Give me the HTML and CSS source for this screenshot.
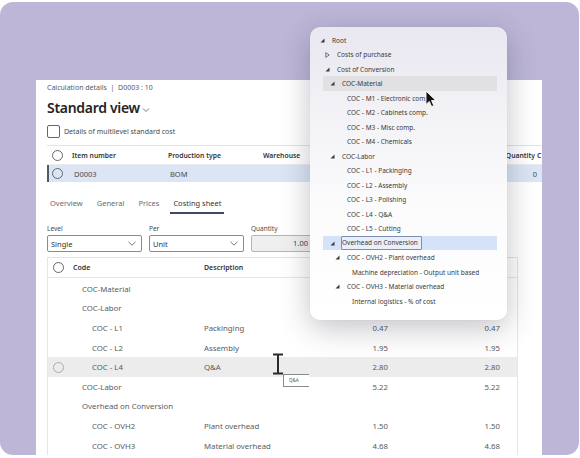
FILE: index.html
```html
<!DOCTYPE html>
<html lang="en">
<head>
<meta charset="utf-8">
<title>Costing sheet</title>
<link rel="stylesheet" href="styles.css">
</head>
<body>
<div class="card">
  <div class="window">
    <div class="crumb">Calculation details &nbsp;|&nbsp; D0003 : 10</div>
    <div class="title">Standard view <svg class="title-chev" width="8" height="6" viewBox="0 0 8 6"><polyline points="1,1.5 4,4.5 7,1.5" fill="none" stroke="#555" stroke-width="0.8"/></svg></div>
    <div class="check"><span class="box"></span><span>Details of multilevel standard cost</span></div>

    <div class="tgrid">
      <div class="trow thead">
        <span class="cell"><span class="radio"></span></span>
        <span class="cell">Item number</span>
        <span class="cell">Production type</span>
        <span class="cell">Warehouse</span>
        <span class="cell num">Quantity</span>
        <span class="cell cc">C</span>
      </div>
      <div class="trow tsel">
        <span class="cell"><span class="radio"></span></span>
        <span class="cell">D0003</span>
        <span class="cell">BOM</span>
        <span class="cell"></span>
        <span class="cell num">0</span>
        <span class="cell cc"></span>
      </div>
    </div>

    <div class="tabs">
      <span class="tab">Overview</span>
      <span class="tab">General</span>
      <span class="tab">Prices</span>
      <span class="tab active">Costing sheet</span>
    </div>

    <div class="filters">
      <div class="field">
        <div class="flabel">Level</div>
        <div class="select">Single<svg width="8" height="5" viewBox="0 0 8 5"><polyline points="0.5,0.8 4,4.2 7.5,0.8" fill="none" stroke="#555" stroke-width="0.8"/></svg></div>
      </div>
      <div class="field">
        <div class="flabel">Per</div>
        <div class="select">Unit<svg width="8" height="5" viewBox="0 0 8 5"><polyline points="0.5,0.8 4,4.2 7.5,0.8" fill="none" stroke="#555" stroke-width="0.8"/></svg></div>
      </div>
      <div class="field">
        <div class="flabel">Quantity</div>
        <div class="qty">1.00</div>
      </div>
    </div>

    <div class="btable">
      <div class="brow bhead">
        <span class="cell"><span class="radio"></span></span>
        <span class="cell code">Code</span>
        <span class="cell">Description</span>
        <span class="cell"></span><span class="cell"></span><span class="cell"></span>
      </div>
      <div class="brow"><span class="cell"></span><span class="cell code lv1">COC-Material</span><span class="cell"></span><span class="cell num"></span><span class="cell num"></span><span class="cell"></span></div>
      <div class="brow"><span class="cell"></span><span class="cell code lv1">COC-Labor</span><span class="cell"></span><span class="cell num"></span><span class="cell num"></span><span class="cell"></span></div>
      <div class="brow"><span class="cell"></span><span class="cell code lv2">COC - L1</span><span class="cell">Packinging</span><span class="cell num">0.47</span><span class="cell num">0.47</span><span class="cell"></span></div>
      <div class="brow"><span class="cell"></span><span class="cell code lv2">COC - L2</span><span class="cell">Assembly</span><span class="cell num">1.95</span><span class="cell num">1.95</span><span class="cell"></span></div>
      <div class="brow hover"><span class="cell"><span class="radio light"></span></span><span class="cell code lv2">COC - L4</span><span class="cell">Q&amp;A</span><span class="cell num">2.80</span><span class="cell num">2.80</span><span class="cell"></span></div>
      <div class="brow"><span class="cell"></span><span class="cell code lv1">COC-Labor</span><span class="cell"></span><span class="cell num">5.22</span><span class="cell num">5.22</span><span class="cell"></span></div>
      <div class="brow"><span class="cell"></span><span class="cell code lv1">Overhead on Conversion</span><span class="cell"></span><span class="cell num"></span><span class="cell num"></span><span class="cell"></span></div>
      <div class="brow"><span class="cell"></span><span class="cell code lv2">COC - OVH2</span><span class="cell">Plant overhead</span><span class="cell num">1.50</span><span class="cell num">1.50</span><span class="cell"></span></div>
      <div class="brow"><span class="cell"></span><span class="cell code lv2">COC - OVH3</span><span class="cell">Material overhead</span><span class="cell num">4.68</span><span class="cell num">4.68</span><span class="cell"></span></div>
    </div>
  </div>

  <div class="ibeam">
    <svg width="12" height="22" viewBox="0 0 12 22"><path d="M1 1.5 H11 M6 1.5 V20.5 M1 20.5 H11" fill="none" stroke="#2b2b2b" stroke-width="2"/></svg>
  </div>
  <div class="tip">Q&amp;A</div>

  <div class="popup">
    <div class="tree">
      <div class="node l0"><span class="tri"><svg width="5" height="5" viewBox="0 0 5 5"><polygon points="4.5,0.5 4.5,4.5 0.5,4.5" fill="#3a3a3a"/></svg></span>Root</div>
      <div class="node l1"><span class="tri"><svg width="5" height="6" viewBox="0 0 5 6"><polygon points="0.8,0.6 4.2,3 0.8,5.4" fill="none" stroke="#555" stroke-width="0.8"/></svg></span>Costs of purchase</div>
      <div class="node l1"><span class="tri"><svg width="5" height="5" viewBox="0 0 5 5"><polygon points="4.5,0.5 4.5,4.5 0.5,4.5" fill="#3a3a3a"/></svg></span>Cost of Conversion</div>
      <div class="node l2 hl-gray"><span class="tri"><svg width="5" height="5" viewBox="0 0 5 5"><polygon points="4.5,0.5 4.5,4.5 0.5,4.5" fill="#3a3a3a"/></svg></span>COC-Material</div>
      <div class="node l3"><span class="tri"></span>COC - M1 - Electronic comp.</div>
      <div class="node l3"><span class="tri"></span>COC - M2 - Cabinets comp.</div>
      <div class="node l3"><span class="tri"></span>COC - M3 - Misc comp.</div>
      <div class="node l3"><span class="tri"></span>COC - M4 - Chemicals</div>
      <div class="node l2"><span class="tri"><svg width="5" height="5" viewBox="0 0 5 5"><polygon points="4.5,0.5 4.5,4.5 0.5,4.5" fill="#3a3a3a"/></svg></span>COC-Labor</div>
      <div class="node l3"><span class="tri"></span>COC - L1 - Packinging</div>
      <div class="node l3"><span class="tri"></span>COC - L2 - Assembly</div>
      <div class="node l3"><span class="tri"></span>COC - L3 - Polishing</div>
      <div class="node l3"><span class="tri"></span>COC - L4 - Q&amp;A</div>
      <div class="node l3"><span class="tri"></span>COC - L5 - Cutting</div>
      <div class="node l2 hl-blue"><span class="tri"><svg width="5" height="5" viewBox="0 0 5 5"><polygon points="4.5,0.5 4.5,4.5 0.5,4.5" fill="#3a3a3a"/></svg></span><span class="editbox">Overhead on Conversion</span></div>
      <div class="node l3"><span class="tri"><svg width="5" height="5" viewBox="0 0 5 5"><polygon points="4.5,0.5 4.5,4.5 0.5,4.5" fill="#3a3a3a"/></svg></span>COC - OVH2 - Plant overhead</div>
      <div class="node l4"><span class="tri"></span>Machine depreciation - Output unit based</div>
      <div class="node l3"><span class="tri"><svg width="5" height="5" viewBox="0 0 5 5"><polygon points="4.5,0.5 4.5,4.5 0.5,4.5" fill="#3a3a3a"/></svg></span>COC - OVH3 - Material overhead</div>
      <div class="node l4"><span class="tri"></span>Internal logistics - % of cost</div>
    </div>
  </div>

  <svg class="pointer" width="12" height="18" viewBox="0 0 12 18"><path d="M1 1 L1 14.5 L4.3 11.4 L6.6 16.6 L8.8 15.6 L6.5 10.5 L10.8 10.5 Z" fill="#111" stroke="#fff" stroke-width="0.9" stroke-linejoin="round"/></svg>
</div>
</body>
</html>
```

FILE: styles.css
```css
* { box-sizing: border-box; }
html, body { margin: 0; padding: 0; background: #ffffff; }
body {
  font-family: "Noto Sans", "Open Sans", sans-serif;
  color: #333;
  width: 580px;
  height: 458px;
  overflow: hidden;
}

.card {
  position: relative;
  width: 579px;
  height: 453px;
  margin-top: 2px;
  background: #bdb6d7;
  border-radius: 13px;
  overflow: hidden;
  padding: 78px 37px 0 36px;
}

.window {
  background: #ffffff;
  height: 100%;
  padding: 0 0 0 11px;
  overflow: hidden;
}

.crumb {
  height: 16px;
  line-height: 16px;
  font-size: 7px;
  color: #5a5a5a;
}

.title {
  margin-top: 1px;
  height: 22px;
  line-height: 22px;
  font-size: 14px;
  font-weight: 600;
  letter-spacing: -0.3px;
  color: #242424;
  display: flex;
  align-items: center;
  gap: 2px;
}
.title-chev { margin-top: 3px; }

.check {
  margin-top: 4px;
  height: 17px;
  display: flex;
  align-items: center;
  gap: 4px;
  font-size: 7px;
  color: #4a4a4a;
}
.box {
  width: 13px;
  height: 13px;
  border: 1px solid #666;
  border-radius: 2px;
  background: #fff;
}

.tgrid { margin-top: 5px; }
.trow {
  display: grid;
  grid-template-columns: 25px 96px 95px 228px 44px 20px;
  align-items: center;
}
.thead {
  height: 20px;
  border-top: 1px solid #e3e3e3;
  border-bottom: 1px solid #ececec;
  font-size: 6.8px;
  font-weight: 600;
  color: #333;
}
.tsel {
  height: 17px;
  background: #dbe5f6;
  border-left: 2px solid #505a6a;
  font-size: 7.5px;
  color: #4a4a4a;
}
.tsel .radio { margin-left: 3px; }
.cell { white-space: nowrap; overflow: hidden; }
.num { text-align: right; }
.cc { padding-left: 2px; }

.radio {
  display: block;
  width: 11px;
  height: 11px;
  border: 1px solid #666;
  border-radius: 50%;
  margin-left: 5px;
}
.radio.light { border-color: #aaa; }

.tabs {
  margin-top: 12px;
  height: 20px;
  display: flex;
  gap: 8px;
  font-size: 7.5px;
  color: #6a6a6a;
}
.tab {
  padding: 0 3px;
  line-height: 18px;
  height: 20px;
  border-bottom: 2px solid transparent;
}
.tab.active {
  color: #333;
  border-bottom-color: #3d4a66;
}

.filters {
  margin-top: 8px;
  display: flex;
  gap: 7px;
}
.field { width: 95px; }
.flabel {
  height: 13px;
  line-height: 13px;
  font-size: 6.5px;
  color: #4a4a4a;
}
.select {
  height: 17px;
  border: 1px solid #8a8a8a;
  border-radius: 2px;
  font-size: 7.5px;
  color: #333;
  padding: 0 5px 0 3px;
  display: flex;
  align-items: center;
  justify-content: space-between;
}
.qty {
  width: 62px;
  height: 17px;
  border: 1px solid #b5b5b5;
  border-radius: 2px;
  background: #efefef;
  font-size: 7.5px;
  color: #444;
  text-align: right;
  line-height: 15px;
  padding-right: 4px;
}

.btable {
  margin-top: 5px;
  width: 471px;
  border-left: 1px solid #e6e6e6;
  border-right: 1px solid #e6e6e6;
  border-bottom: 1px solid #dcdcdc;
}
.brow {
  display: grid;
  grid-template-columns: 24px 132px 120px 64px 112px 18px;
  align-items: center;
  height: 19.6px;
  font-size: 7.8px;
  color: #5a5a5a;
}
.bhead {
  height: 21px;
  margin-bottom: 1px;
  border-top: 1px solid #e3e3e3;
  border-bottom: 1px solid #e6e6e6;
  font-weight: 600;
  color: #333;
  font-size: 7px;
}
.code { padding-left: 1px; }
.lv1 { padding-left: 10px; }
.lv2 { padding-left: 20px; }
.brow.hover { background: #ececec; }

.ibeam {
  position: absolute;
  left: 272px;
  top: 351px;
  width: 12px;
  height: 22px;
}
.ibeam svg { display: block; }
.tip {
  position: absolute;
  left: 283px;
  top: 372px;
  width: 26px;
  height: 13px;
  border: 1px solid #8a8a8a;
  border-right: none;
  background: #fff;
  font-size: 4.5px;
  color: #555;
  padding-left: 5px;
  line-height: 11px;
}

.popup {
  position: absolute;
  left: 310px;
  top: 25px;
  width: 197px;
  height: 293px;
  border-radius: 10px;
  background: linear-gradient(180deg, #e9e7f0 0%, #f3f2f6 30%, #fbfbfc 60%, #ffffff 100%);
  box-shadow: 0 8px 30px rgba(40, 40, 60, 0.28), 0 0 1px rgba(0, 0, 0, 0.15);
  padding: 5.75px 10px 0 13px;
}
.node {
  height: 14.5px;
  display: flex;
  align-items: center;
  font-size: 6.5px;
  color: #3a3a3a;
  white-space: nowrap;
}
.tri {
  width: 12px;
  flex: none;
  display: flex;
  align-items: center;
}
.tri svg { display: block; }
.l0 .tri { margin-left: -3px; }
.l1 { padding-left: 2px; }
.l2 { padding-left: 7px; }
.l3 { padding-left: 12px; }
.l4 { padding-left: 17px; }
.hl-gray { background: #e1e1e3; }
.hl-blue { background: #d6e2f7; }
.editbox {
  border: 1px solid #7d8fb0;
  border-radius: 1px;
  background: #e8effb;
  margin-left: -1px;
  padding: 0 3px 0 0;
  line-height: 12px;
  height: 14px;
}

.pointer {
  position: absolute;
  left: 425px;
  top: 88px;
}
```
